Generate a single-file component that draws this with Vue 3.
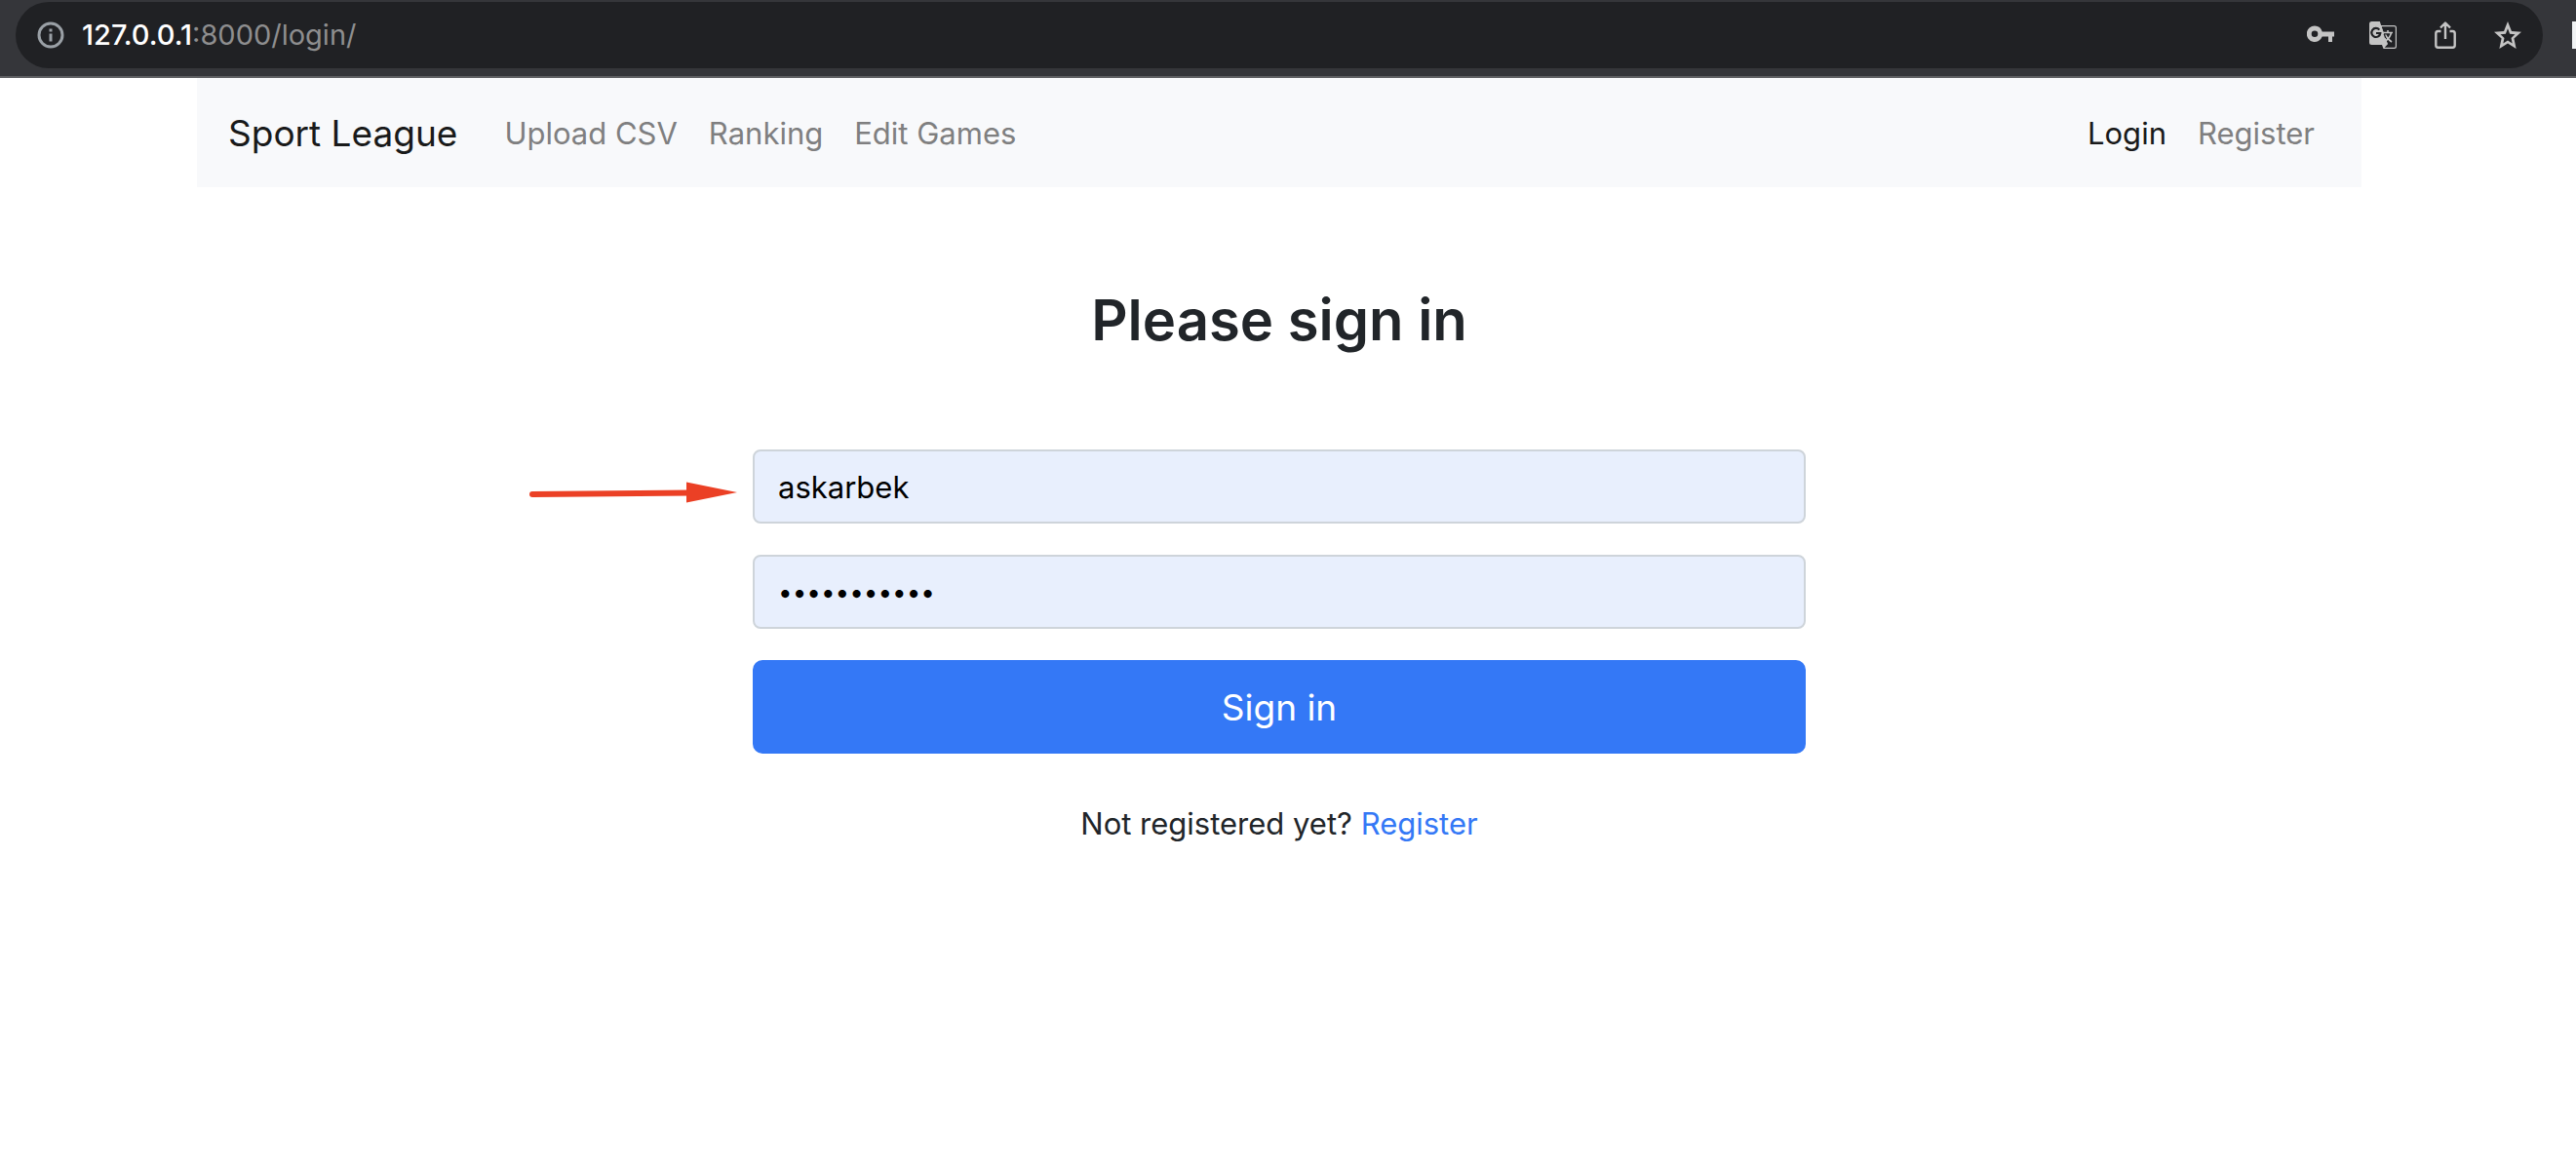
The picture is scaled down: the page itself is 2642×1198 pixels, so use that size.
<script setup>
import { ref } from 'vue'

const username = ref('askarbek')
const password = ref('sportleague')

const mainLinks = ['Upload CSV', 'Ranking', 'Edit Games']
</script>

<template>
  <div class="window">
    <header class="toolbar">
      <div class="address">
        <button class="icon" type="button" aria-label="Site information">
          <svg width="28" height="28" viewBox="0 0 28 28">
            <circle cx="14" cy="14" r="12" fill="none" stroke="#9aa0a6" stroke-width="3" />
            <path d="M12.500 7.500h3v3h-3zM12.500 12.500h3v8h-3z" fill="#9aa0a6" />
          </svg>
        </button>
        <div class="url"><span class="host">127.0.0.1</span>:8000/login/</div>
        <div class="actions">
          <button class="icon" type="button" aria-label="Passwords">
            <svg width="28" height="28" viewBox="0 0 28 28">
              <path fill="#c4c4c4" fill-rule="evenodd" d="M8 4.500a8.200 8.200 0 1 0 7.700 11H22V21h4v-5.500h2v-5H15.700A8.200 8.200 0 0 0 8 4.500zM8 9.500a3.300 3.300 0 1 1 0 6.600 3.300 3.300 0 0 1 0-6.600z" />
            </svg>
          </button>
          <button class="icon" type="button" aria-label="Translate this page">
            <svg width="28" height="28" viewBox="0 0 28 28">
              <path fill="#c4c4c4" d="M2.500 0h8.300l1.300 4h13.400A2.500 2.500 0 0 1 28 6.500v19a2.500 2.500 0 0 1-2.500 2.500H14.500l-1.500-4H2.500A2.500 2.500 0 0 1 0 21.500v-19A2.500 2.500 0 0 1 2.500 0z" />
              <path fill="#202124" d="M12.500 5.200h13a1.300 1.300 0 0 1 1.300 1.300v19a1.300 1.300 0 0 1-1.300 1.300h-9.800l3.200-3.600z" />
              <path fill="#c4c4c4" d="M11 4l1.500 1.200 6.300 18H13L11 20z" />
              <path fill="none" stroke="#202124" stroke-width="2.200" d="M10.300 8.600A4.500 4.500 0 1 0 11.300 12H7" />
              <path fill="none" stroke="#c4c4c4" stroke-width="1.600" d="M14.500 11.500h9.500M19 9v2.500M22.500 11.500c-.8 4-3.500 7-6.500 9M16.500 13.500c1.200 3 3.500 5.500 6.500 7.500" />
              <path fill="none" stroke="#202124" stroke-width="1.200" d="M15.200 12.800l1.500 4.200" />
            </svg>
          </button>
          <button class="icon" type="button" aria-label="Share this page">
            <svg width="28" height="28" viewBox="0 0 28 28">
              <path fill="none" stroke="#c4c4c4" stroke-width="2.400" stroke-linejoin="round" d="M9.500 10H6.500A2.300 2.300 0 0 0 4.300 12.300v12.200a2.300 2.300 0 0 0 2.200 2.300h15a2.300 2.300 0 0 0 2.200-2.300V12.300A2.300 2.300 0 0 0 21.500 10H18.500M14 18V1.700M9 6.500l5-5 5 5" />
            </svg>
          </button>
          <button class="icon" type="button" aria-label="Bookmark this page">
            <svg width="28" height="28" viewBox="0 0 24 24">
              <path fill="#c4c4c4" d="M24 9.200l-8.600-.7L12 0 8.600 8.500 0 9.200l6.500 5.900L4.600 24 12 19.300 19.400 24l-1.900-8.900zM12 16.800l-4 2.500 1-4.800-3.400-3.200 4.600-.4L12 6.300l1.800 4.600 4.600.4-3.400 3.200 1 4.800z" />
            </svg>
          </button>
        </div>
      </div>
      <span class="extension"></span>
    </header>

    <div class="page">
      <nav class="navbar">
        <a class="brand" href="#">Sport League</a>
        <a v-for="link in mainLinks" :key="link" class="nav-link" href="#">{{ link }}</a>
        <a class="nav-link active push" href="#">Login</a>
        <a class="nav-link" href="#">Register</a>
      </nav>

      <main class="signin">
        <h1>Please sign in</h1>
        <form @submit.prevent>
          <div class="field">
            <svg class="arrow" width="214" height="24" viewBox="0 0 214 24">
              <path d="M3 14L166 12.500" stroke="#eb4025" stroke-width="6" stroke-linecap="round" />
              <path d="M161 1.500L213 12L161 22.500z" fill="#eb4025" />
            </svg>
            <input v-model="username" type="text" aria-label="Username" autocomplete="off" />
          </div>
          <div class="field">
            <input v-model="password" class="secret" type="password" aria-label="Password" autocomplete="off" />
          </div>
          <button class="submit" type="submit">Sign in</button>
        </form>
        <p>Not registered yet? <a href="#">Register</a></p>
      </main>
    </div>
  </div>
</template>

<style>
body {
  margin: 0;
  background: #fff;
}
</style>

<style scoped>
.window {
  font-family: Inter, "Liberation Sans", sans-serif;
  font-size: 31px;
  line-height: 48px;
  color: #212529;
}

.window * {
  box-sizing: border-box;
}

.toolbar {
  display: flex;
  align-items: center;
  justify-content: space-between;
  height: 80px;
  padding: 2px 0 8px 16px;
  border-bottom: 2px solid #5f6063;
  background: #35363a;
}

.address {
  flex: 1;
  display: flex;
  align-items: center;
  height: 68px;
  margin-right: 30px;
  padding: 0 22px;
  border-radius: 34px;
  background: #202124;
}

.icon {
  display: flex;
  padding: 0;
  border: 0;
  background: none;
}

.url {
  margin-left: 18px;
  font-size: 29px;
  color: #8e8e8f;
}

.host {
  font-weight: 500;
  color: #fff;
}

.actions {
  display: flex;
  gap: 36px;
  margin-left: auto;
}

.extension {
  width: 4px;
  height: 28px;
  background: #f1f3f4;
}

.page {
  padding-right: 18px;
}

.navbar {
  display: flex;
  align-items: center;
  max-width: 2220px;
  height: 112px;
  margin: 0 auto;
  padding: 2px 32px 0;
  background: #f8f9fb;
}

a {
  text-decoration: none;
}

.brand {
  margin-right: 32px;
  font-size: 37px;
  color: #191a1a;
}

.nav-link {
  padding: 0 16px;
  color: #7f7f80;
}

.nav-link.active {
  color: #191a1a;
}

.push {
  margin-left: auto;
}

.signin {
  max-width: 1080px;
  margin: 0 auto;
  padding-top: 98px;
  text-align: center;
}

h1 {
  margin: 0 0 94px;
  font-size: 58px;
  font-weight: 600;
  line-height: 77px;
}

form {
  display: flex;
  flex-direction: column;
  gap: 32px;
}

.field {
  position: relative;
}

.arrow {
  position: absolute;
  top: 32px;
  right: 100%;
  margin-right: 15px;
}

input {
  display: block;
  width: 100%;
  height: 76px;
  padding: 0 24px;
  border: 2px solid #ced4da;
  border-radius: 8px;
  background: #e8effd;
  font: inherit;
  color: #000;
}

.secret {
  font-size: 26px;
}

.submit {
  height: 96px;
  padding: 2px 0 0;
  border: 0;
  border-radius: 10px;
  background: #3478f6;
  font: inherit;
  font-size: 37px;
  color: #fff;
}

p {
  margin: 48px 0 0;
}

p a {
  color: #3478f6;
}
</style>
